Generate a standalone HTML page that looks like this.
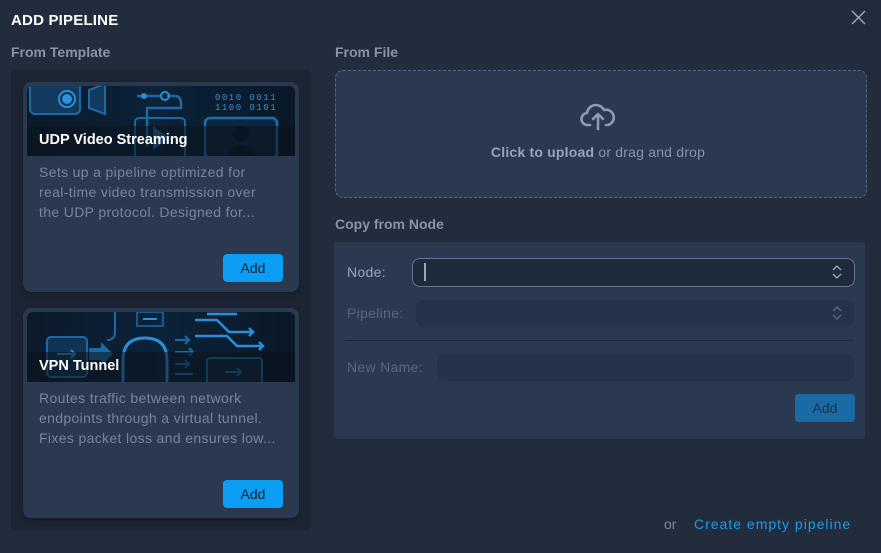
<!DOCTYPE html>
<html><head><meta charset="utf-8"><style>
*{box-sizing:border-box;margin:0;padding:0}
body{width:881px;height:553px;background:#232c3d;font-family:"Liberation Sans",sans-serif;position:relative;overflow:hidden;color:#8b99b1}
.a{position:absolute}
.h{font-weight:bold;font-size:14px;color:#8794ab;letter-spacing:0}
.card{position:absolute;left:23px;width:276px;height:210px;background:#2a3850;border-radius:8px;box-shadow:0 2px 6px rgba(0,0,0,.3)}
.img{position:absolute;left:4px;top:4px;width:268px;height:70px;border-radius:6px 6px 0 0;overflow:hidden;background:linear-gradient(90deg,#0c1a2b,#0b2238 50%,#0a1828)}
.img .band{position:absolute;left:0;right:0;top:40px;bottom:0;background:rgba(12,18,28,.55)}
.img .t{position:absolute;left:12px;top:46px;color:#fff;font-weight:bold;font-size:14.5px;letter-spacing:0}
.desc{position:absolute;left:16px;top:80px;width:260px;font-size:14px;line-height:20px;color:#76849c;letter-spacing:.35px;white-space:nowrap}
.btn{position:absolute;width:60px;height:28px;border-radius:4px;background:#0b9ef2;color:#0f2237;font-size:14px;text-align:center;line-height:28px}
.lbl{position:absolute;font-size:14px;letter-spacing:.3px}
</style></head><body>
<div class="a" style="left:11px;top:12px;color:#fff;font-weight:bold;font-size:15px;letter-spacing:.2px">ADD PIPELINE</div>
<svg class="a" style="left:851px;top:10px" width="15" height="15" viewBox="0 0 15 15"><path d="M1 1L14 14M14 1L1 14" stroke="#9aa5b8" stroke-width="1.5"/></svg>
<div class="a h" style="left:11px;top:44px">From Template</div>
<div class="a" style="left:11px;top:70px;width:300px;height:460px;background:#1d2535;border-radius:3px"></div>

<div class="card" style="top:82px">
 <div class="img">
  <svg width="268" height="70" class="a" style="left:0;top:0">
   <rect x="3" y="-8" width="50" height="36" rx="5" fill="#123a5e" stroke="#1c6aa5" stroke-width="2"/>
   <circle cx="40" cy="13" r="8" fill="#0e2e4d" stroke="#2a8fd6" stroke-width="2"/><circle cx="40" cy="13" r="5" fill="#2a93dc"/>
   <path d="M62 4L78 -2V28L62 22Z" fill="#123a5e" stroke="#1c6aa5" stroke-width="2"/>
   <path d="M110 10H134M140 10H148q6 0 6 8V22H120V60" stroke="#1c6aa5" stroke-width="2.5" fill="none"/>
   <circle cx="117" cy="10" r="3" fill="#2a8fd6"/><circle cx="138" cy="10" r="4" fill="none" stroke="#2a8fd6" stroke-width="2"/>
   <path d="M128 -5q12 6 24 0" stroke="#1c6aa5" stroke-width="4" fill="none"/>
   <rect x="108" y="32" width="50" height="40" rx="4" fill="none" stroke="#1c6aa5" stroke-width="2"/>
   <path d="M126 40L142 52L126 64Z" fill="#1c6aa5"/>
   <text x="188" y="14" fill="#3a8fd0" font-family="Liberation Mono" font-size="9" letter-spacing="1.5">0010 0011</text>
   <text x="188" y="24" fill="#3a8fd0" font-family="Liberation Mono" font-size="9" letter-spacing="1.5">1100 0101</text>
   <rect x="178" y="32" width="72" height="40" rx="5" fill="#0d2640" stroke="#1f6eac" stroke-width="2.5"/>
   <circle cx="214" cy="48" r="8" fill="#0a1a2b"/><path d="M198 70q16 -22 32 0" fill="#0a1a2b"/>
  </svg>
  <div class="band"></div><div class="t">UDP Video Streaming</div>
 </div>
 <div class="desc">Sets up a pipeline optimized for<br>real-time video transmission over<br>the UDP protocol. Designed for...</div>
 <div class="btn" style="left:200px;top:172px">Add</div>
</div>

<div class="card" style="top:308px">
 <div class="img">
  <svg width="268" height="70" class="a" style="left:0;top:0">
   <rect x="20" y="25" width="40" height="40" rx="4" fill="#0f3354" stroke="#1c6aa5" stroke-width="2"/>
   <path d="M30 42H48M44 38l4 4-4 4" stroke="#2a8fd6" stroke-width="2" fill="none"/>
   <path d="M62 36H74V30L86 42L74 54V48H62Z" fill="#1c6aa5"/>
   <path d="M88 0V20q0 8-8 8" stroke="#1c6aa5" stroke-width="2" fill="none"/>
   <rect x="110" y="0" width="26" height="14" fill="none" stroke="#1c6aa5" stroke-width="1.5"/><path d="M116 7H130" stroke="#2a8fd6" stroke-width="2"/>
   <path d="M96 70V48q0-22 22-22q22 0 22 22V70" stroke="#2a8fd6" stroke-width="3" fill="none"/>
   <path d="M148 28H162M158 24l4 4-4 4M148 40H166M162 36l4 4-4 4M148 52H162M158 48l4 4-4 4M148 62H166" stroke="#1c6aa5" stroke-width="2" fill="none"/>
   <path d="M168 8H190L202 20H226M222 16l4 4-4 4M168 24H200L210 34H236M232 30l4 4-4 4M180 2H210" stroke="#2a8fd6" stroke-width="2.5" fill="none"/>
   <rect x="180" y="46" width="55" height="30" rx="3" fill="#0d2640" stroke="#1c6aa5" stroke-width="2"/>
   <path d="M198 60H214M210 56l4 4-4 4" stroke="#1c6aa5" stroke-width="2" fill="none"/>
  </svg>
  <div class="band"></div><div class="t">VPN Tunnel</div>
 </div>
 <div class="desc">Routes traffic between network<br>endpoints through a virtual tunnel.<br>Fixes packet loss and ensures low...</div>
 <div class="btn" style="left:200px;top:172px">Add</div>
</div>

<div class="a h" style="left:335px;top:44px">From File</div>
<div class="a" style="left:335px;top:70px;width:532px;height:128px;background:#2a3850;border:1.5px dashed #56657e;border-radius:8px"></div>
<svg class="a" style="left:580px;top:101px" width="36" height="30" viewBox="0 0 36 30"><path d="M10 24H8a6 6 0 0 1-1-12a9 9 0 0 1 17-3a7 7 0 0 1 4 15h-2M18 28V13M13 18l5-5 5 5" stroke="#8d9ab0" stroke-width="2.6" fill="none" stroke-linecap="round" stroke-linejoin="round"/></svg>
<div class="a" style="left:335px;width:526px;top:144px;text-align:center;font-size:14px;color:#8794ab;letter-spacing:.2px"><b style="color:#97a3b8">Click to upload</b> or drag and drop</div>

<div class="a h" style="left:335px;top:216px">Copy from Node</div>
<div class="a" style="left:334px;top:242px;width:531px;height:197px;background:#2a3850;border-radius:3px"></div>
<div class="lbl" style="left:347px;top:264px;color:#9aa6ba">Node:</div>
<div class="a" style="left:412px;top:258px;width:443px;height:29px;background:#1f2a3d;border:1px solid #66758e;border-radius:8px"></div>
<div class="a" style="left:424px;top:263px;width:1.5px;height:18px;background:#9aa6ba"></div>
<div class="lbl" style="left:347px;top:305px;color:#58667e">Pipeline:</div>
<div class="a" style="left:416px;top:300px;width:438px;height:27px;background:#253247;border-radius:8px"></div>
<svg class="a" style="left:830px;top:264px" width="14" height="16"><path d="M3 6l4-4 4 4M3 10l4 4 4-4" stroke="#9aa6ba" stroke-width="1.3" fill="none"/></svg>
<svg class="a" style="left:830px;top:305px" width="14" height="16"><path d="M3 6l4-4 4 4M3 10l4 4 4-4" stroke="#58667e" stroke-width="1.3" fill="none"/></svg>
<div class="a" style="left:345px;top:340px;width:509px;height:1px;background:#1f2838"></div>
<div class="lbl" style="left:347px;top:359px;color:#58667e">New Name:</div>
<div class="a" style="left:437px;top:354px;width:417px;height:27px;background:#253247;border-radius:8px"></div>
<div class="btn" style="left:795px;top:394px;background:#1a6aa4;color:#17314f">Add</div>

<div class="a" style="left:664px;top:516px;font-size:14px;color:#7b889e">or</div>
<div class="a" style="left:694px;top:516px;font-size:14px;color:#1a9cea;letter-spacing:1px">Create empty pipeline</div>
</body></html>
